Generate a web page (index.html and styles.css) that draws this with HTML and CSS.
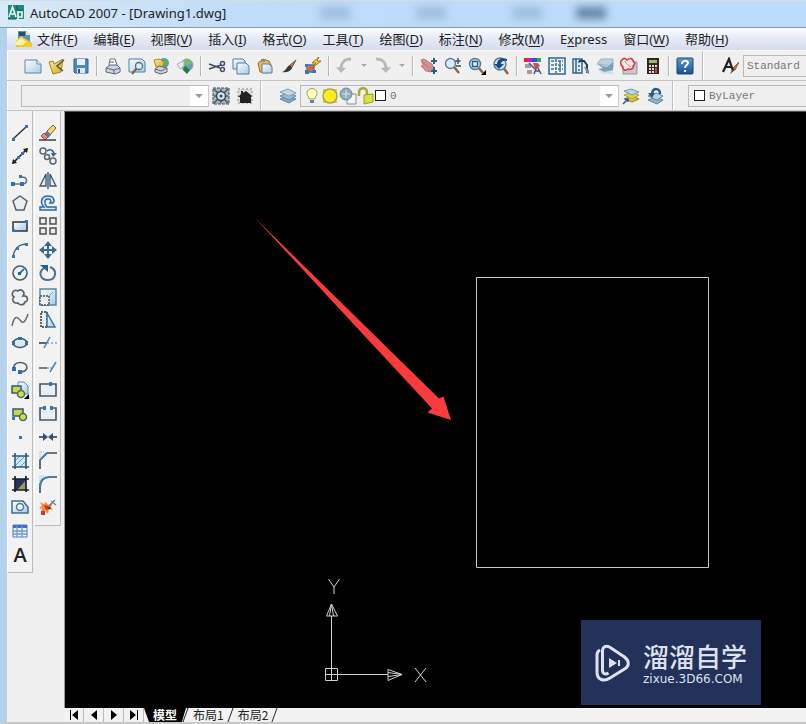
FILE: index.html
```html
<!DOCTYPE html>
<html lang="zh-CN">
<head>
<meta charset="utf-8">
<title>AutoCAD 2007 - [Drawing1.dwg]</title>
<link rel="stylesheet" href="styles.css">
</head>
<body>
<svg class="defs" aria-hidden="true">
  <defs>
    <linearGradient id="paper" x1="0" y1="0" x2="1" y2="1"><stop offset="0" stop-color="#fdfeff"/><stop offset="1" stop-color="#a9cbe6"/></linearGradient>
    <linearGradient id="gold" x1="0" y1="0" x2="1" y2="1"><stop offset="0" stop-color="#fff0a0"/><stop offset="1" stop-color="#d6a51c"/></linearGradient>
    <linearGradient id="blue" x1="0" y1="0" x2="0" y2="1"><stop offset="0" stop-color="#5b9bd8"/><stop offset="1" stop-color="#1b4f92"/></linearGradient>
  </defs>
</svg>

<header class="titlebar">
  <svg class="app-logo" viewBox="0 0 16 16"><rect width="16" height="14" fill="#23887a"/><path d="M1 12L4.500 2 8 12M3 9h4M10 6v9M10 7h4v5h-4" fill="none" stroke="#e9fff8" stroke-width="1.600"/><path d="M9 0v5h6M0 14h8" stroke="#0d5b50" fill="none"/></svg>
  <h1>AutoCAD 2007 - [Drawing1.dwg]</h1>
  <div class="reflections" aria-hidden="true"><i></i><i></i><i></i><i class="dark"></i></div>
</header>

<div class="frame">
  <nav class="menubar">
    <svg class="doc-logo" viewBox="0 0 18 18"><path d="M3 1h8l4 4v10H3z" fill="#5d91bc"/><path d="M4 2h6v4H4z" fill="#234f70"/><path d="M11 1v4h4" fill="#d9ebf6"/><path d="M1 11l5-5 11 7v4H1z" fill="#f5c822"/><path d="M1 12l5-4 6 4-4 3H1z" fill="#fff1a0"/></svg>
    <a href="#">文件(<u>F</u>)</a><a href="#">编辑(<u>E</u>)</a><a href="#">视图(<u>V</u>)</a><a href="#">插入(<u>I</u>)</a><a href="#">格式(<u>O</u>)</a><a href="#">工具(<u>T</u>)</a><a href="#">绘图(<u>D</u>)</a><a href="#">标注(<u>N</u>)</a><a href="#">修改(<u>M</u>)</a><a href="#">E<u>x</u>press</a><a href="#">窗口(<u>W</u>)</a><a href="#">帮助(<u>H</u>)</a>
  </nav>

  <div class="toolrow">
    <div class="bar bar-standard">
      <button aria-label="新建"><svg viewBox="0 0 18 18"><path d="M1 3h12l4 4v9H1z" fill="url(#paper)" stroke="#5b86a8"/><path d="M13 3v4h4" fill="#fff" stroke="#5b86a8"/></svg></button>
      <button aria-label="打开"><svg viewBox="0 0 18 18"><path d="M1 5l4-1 1 3 9-5-2 13-8 2z" fill="url(#gold)" stroke="#a68424"/><path d="M16 3l-7 6 6 5" fill="none" stroke="#4f5c50" stroke-width="1.500"/></svg></button>
      <button aria-label="保存"><svg viewBox="0 0 18 18"><path d="M2 2h14v14H3l-1-1z" fill="#5189bd" stroke="#35628f"/><path d="M5 2h8v6H5z" fill="#e6f1f9"/><path d="M5 11h8v5H5z" fill="#dbe8f2"/><path d="M6 12h2v4H6z" fill="#295988"/></svg></button>
      <span class="sep"></span>
      <button aria-label="打印"><svg viewBox="0 0 18 18"><path d="M5 8l1-6h5l2 6" fill="#fff" stroke="#65738b"/><path d="M2 11l4-3h7l3 3v4l-5 2-9-2z" fill="#cdd4e0" stroke="#59677f"/><path d="M2 11l8 2 6-2M10 13v4M5 5h5" fill="none" stroke="#59677f"/></svg></button>
      <button aria-label="打印预览"><svg viewBox="0 0 18 18"><path d="M1 2h13l3 3v10H1z" fill="url(#paper)" stroke="#4e7ea8"/><circle cx="11" cy="9" r="3.500" fill="#d6edfa" stroke="#4c7288" stroke-width="1.300"/><path d="M8.500 11.500L4 17" stroke="#8b5b3f" stroke-width="2"/></svg></button>
      <button aria-label="发布"><svg viewBox="0 0 18 18"><circle cx="12" cy="6" r="5" fill="#5d9ab5"/><path d="M11 2l5 2-1 5-4-2z" fill="#6aab55"/><path d="M2 3l6-1 4 4-2 5-6-1z" fill="url(#gold)" stroke="#b28a1d"/><path d="M3 12l4-3 8 2v4l-6 2-6-2z" fill="#cfd3d9" stroke="#5e6670"/><path d="M3 12l6 2 6-3" fill="none" stroke="#5e6670"/></svg></button>
      <button aria-label="三维 DWF"><svg viewBox="0 0 18 18"><circle cx="11" cy="8" r="6" fill="#5b9fb5" stroke="#8ba5b0"/><path d="M8 3l5-1 3 4-4 3-4-2z" fill="#80b86c"/><path d="M1 7l7-3v5l-4 3z" fill="#e5ebee" stroke="#aab3b8"/><path d="M9 9l5 4-3 4-4-4z" fill="#1f7b44"/></svg></button>
      <span class="sep"></span>
      <button aria-label="剪切"><svg viewBox="0 0 18 18"><path d="M1 7l11 4M1 12l12-4" stroke="#414f66" stroke-width="1.600"/><circle cx="14.500" cy="6.500" r="2" fill="none" stroke="#424e72" stroke-width="1.500"/><circle cx="14.500" cy="12.500" r="2" fill="none" stroke="#424e72" stroke-width="1.500"/></svg></button>
      <button aria-label="复制"><svg viewBox="0 0 18 18"><path d="M1 2h10l2 2v8H1z" fill="url(#paper)" stroke="#4e7ea8"/><path d="M5 6h9l3 3v8H5z" fill="url(#paper)" stroke="#4e7ea8"/></svg></button>
      <button aria-label="粘贴"><svg viewBox="0 0 18 18"><path d="M2 6l5-4 6 2 3 6-4 6-8-1z" fill="#e6b855" stroke="#9e7423"/><path d="M5 2h4v3H5z" fill="#8a8f92"/><path d="M6 7h7l3 3v6H6z" fill="url(#paper)" stroke="#56829f"/></svg></button>
      <button aria-label="特性匹配"><svg viewBox="0 0 18 18"><path d="M16 3L9 9l2 3z" fill="#b98454" stroke="#79512f"/><path d="M10 8l2 3c-2 4-6 5-10 4 4-1 4-5 8-7z" fill="#353a42"/></svg></button>
      <button aria-label="块编辑器"><svg viewBox="0 0 18 18"><path d="M3 8h7v7H3z" fill="#f09a60" stroke="#3769a8" stroke-width="1.300"/><path d="M1 13h4v4H1zM8 13h4v3H8zM1 7h3v3H1z" fill="#3478c4"/><circle cx="6.500" cy="11.500" r="2.500" fill="#ec5d24"/><path d="M15 0L8 6h4l-4 5 9-7h-4z" fill="#ffd21e" stroke="#8f7418"/></svg></button>
      <span class="sep"></span>
      <button aria-label="放弃"><svg viewBox="0 0 18 18"><path d="M15 2C8 2 5 5 5 13" fill="none" stroke="#b8b9bb" stroke-width="3"/><path d="M0 10l5 6 5-5z" fill="#b8b9bb"/></svg></button>
      <button class="drop" aria-label="放弃列表"><svg viewBox="0 0 8 8"><path d="M1 2h6L4 5z" fill="#aaa"/></svg></button>
      <button aria-label="重做"><svg viewBox="0 0 18 18"><path d="M2 2c7 0 10 3 10 11" fill="none" stroke="#b8b9bb" stroke-width="3"/><path d="M7 11l5 5 5-6z" fill="#b8b9bb"/></svg></button>
      <button class="drop" aria-label="重做列表"><svg viewBox="0 0 8 8"><path d="M1 2h6L4 5z" fill="#aaa"/></svg></button>
      <span class="sep"></span>
      <button aria-label="实时平移"><svg viewBox="0 0 18 18"><path d="M1 3l3-1 8 5 2 4-3 4-5-1-5-5 2-1z" fill="#d58f8b" stroke="#b9807c"/><path d="M2 5l6 5" stroke="#b9746f"/><path d="M14 1v6M11 4h6M14 10v7M11 14h6" stroke="#2b5d91" stroke-width="2"/></svg></button>
      <button aria-label="实时缩放"><svg viewBox="0 0 18 18"><path d="M10 10l5 6" stroke="#94643e" stroke-width="2.500"/><circle cx="6.500" cy="6.500" r="5" fill="#d7edf8" stroke="#647e8d" stroke-width="1.400"/><path d="M14 1v6M11.500 4h5M12 9h5" stroke="#334b69" stroke-width="1.400"/></svg></button>
      <button aria-label="窗口缩放"><svg viewBox="0 0 18 18"><path d="M10 10l5 6" stroke="#94643e" stroke-width="2.500"/><circle cx="7" cy="7" r="5.500" fill="#b9dbed" stroke="#5b788d" stroke-width="1.400"/><path d="M4.500 4.500h5v5h-5z" fill="#dceefa" stroke="#315d87" stroke-width="1.300"/><path d="M18 13v5h-5z" fill="#000"/></svg></button>
      <button aria-label="缩放上一个"><svg viewBox="0 0 18 18"><path d="M11 10l5 7" stroke="#94643e" stroke-width="2.500"/><circle cx="8" cy="7" r="6" fill="#c8e4f2" stroke="#5b788d" stroke-width="1.400"/><path d="M15 2C9 0 5 3 5 7H2l5 5 5-5H9c0-2 2-4 6-3z" fill="#174c83"/></svg></button>
      <span class="sep"></span>
      <button aria-label="特性"><svg viewBox="0 0 18 18"><path d="M0 1h4v4H0z" fill="#e22"/><path d="M4 1h4v4H4z" fill="#b624d0"/><path d="M8 1h5v4H8z" fill="#394ce2"/><path d="M13 1h4v4h-4z" fill="#22aa67"/><path d="M1 7h6v4H1zM3 13h5v4H3z" fill="#ae98a8"/><path d="M10 17l3-8 4 8M11 14h5M5 6l6 6" fill="none" stroke="#465771" stroke-width="1.500"/><path d="M9 6h5l2 3-5 3z" fill="#cd5155"/></svg></button>
      <button aria-label="设计中心"><svg viewBox="0 0 18 18"><path d="M1 1h16v16H1z" fill="#eaf4fb" stroke="#2f658e" stroke-width="1.500"/><path d="M3 4h5M3 8h5M3 12h5M10 4h5M10 8h5M10 12h5M8 2v14M12 4v11" stroke="#47718f" stroke-width="1.500" stroke-dasharray="3 1"/></svg></button>
      <button aria-label="工具选项板"><svg viewBox="0 0 18 18"><path d="M1 2h9v14H1z" fill="#e0eef8" stroke="#31658f" stroke-width="1.500"/><path d="M4 2v14M6 5h2M6 9h2M6 13h2" stroke="#31658f" stroke-width="1.500"/><path d="M7 4h5l3 4v8" fill="none" stroke="#213e58" stroke-width="2"/><path d="M12 9l5 4v4l-3-2z" fill="#718da0"/></svg></button>
      <button aria-label="图纸集"><svg viewBox="0 0 18 18"><path d="M5 2h12v9L9 8 1 7z" fill="#bcd3df" stroke="#98aeb9"/><path d="M1 7l10 3 6-5v11L8 15l-6-3 5-1z" fill="#79a1b8"/><path d="M1 13l7 2 9-2v4H7z" fill="#d4e2e8"/></svg></button>
      <button aria-label="标记集"><svg viewBox="0 0 18 18"><path d="M5 5h12v12H3v-4z" fill="#c7c9cc" stroke="#929598"/><path d="M2 3c2-3 4-1 5 0 3-3 6-1 6 1 3 2 1 5 0 5 1 3-3 4-5 3-2 2-6 1-5-2C0 8 0 4 2 3z" fill="#fbe8e8" stroke="#df3947" stroke-width="1.600"/><path d="M5 4c1 3 3 4 6 6" stroke="#e58088" fill="none"/></svg></button>
      <button aria-label="快速计算器"><svg viewBox="0 0 18 18"><path d="M3 1h12v16H3z" fill="#38261f"/><path d="M5 3h8v3H5z" fill="#95bb80"/><path d="M5 8h2v2H5zM8 8h2v2H8zM11 8h2v2h-2zM5 11h2v2H5zM8 11h2v2H8zM5 14h2v2H5zM8 14h2v2H8z" fill="#ddd"/><path d="M11 11h2v5h-2z" fill="#cb4942"/></svg></button>
      <span class="sep"></span>
      <button aria-label="帮助"><svg viewBox="0 0 18 18"><rect x="1" y="1" width="16" height="16" rx="1" fill="url(#blue)" stroke="#174678"/><path d="M6 7c0-4 6-4 6-1 0 2-3 2-3 5" fill="none" stroke="#fff" stroke-width="2"/><path d="M8 13h2v2H8z" fill="#fff"/></svg></button>
    </div>
    <div class="bar bar-style">
      <button aria-label="文字样式"><svg viewBox="0 0 18 18"><path d="M2 15L8 2l4 12M4 10h7" fill="none" stroke="#222" stroke-width="2.200"/><path d="M18 5l-6 6 2 2z" fill="#b97f4f" stroke="#8f5e39"/><path d="M12 11l2 2-5 4z" fill="#444"/></svg></button>
      <select class="box grow" aria-label="文字样式名"><option>Standard</option></select>
    </div>
  </div>

  <div class="toolrow">
    <div class="bar bar-workspace">
      <div class="combo box grow"><select aria-label="工作空间"><option></option></select><span class="arrow"><svg viewBox="0 0 8 8"><path d="M0 2h8L4 6z" fill="#999"/></svg></span></div>
      <button aria-label="工作空间设置"><svg viewBox="0 0 18 18"><path d="M1 1h16v16H1z" fill="#a9b7bf" stroke="#3b4c56" stroke-dasharray="3 1"/><path d="M2 2l14 14M16 2L2 16M9 2v14M2 9h14" stroke="#455b68" stroke-width="1.500"/><circle cx="9" cy="9" r="4.500" fill="#d7e0e5" stroke="#394c59" stroke-width="1.500"/><circle cx="9" cy="9" r="1.500" fill="#394c59"/></svg></button>
      <button aria-label="我的工作空间"><svg viewBox="0 0 18 18"><path d="M2 2h14v14H2z" fill="#ddd" stroke="#8b8b8b" stroke-dasharray="2 2"/><path d="M2 10l3-3V4h2v2l3-2 6 5-1 1v6H4v-6z" fill="#202224"/></svg></button>
    </div>
    <div class="bar bar-layers">
      <button aria-label="图层特性"><svg viewBox="0 0 18 18"><path d="M1 12l8-3 8 3-7 4z" fill="#8aa7bc" stroke="#6887a0"/><path d="M1 9l8-3 8 3-7 4z" fill="#9fbbd0" stroke="#6887a0"/><path d="M1 5l8-3 8 4-7 3z" fill="#c4d9e8" stroke="#809db4"/></svg></button>
      <div class="combo box grow">
        <span class="layer-state" aria-hidden="true">
          <svg viewBox="0 0 18 18"><path d="M6 12c0-3-2-3-2-6 0-6 10-6 10 0 0 3-2 3-2 6z" fill="#fffbbd" stroke="#aaa365"/><path d="M7 13h4v3H7z" fill="#748591"/></svg>
          <svg viewBox="0 0 18 18"><path d="M2 2h14v14H2z" fill="#c9cf79"/><circle cx="9" cy="9" r="7" fill="#ffee19" stroke="#aaa34b" stroke-width="1.500"/></svg>
          <svg viewBox="0 0 18 18"><path d="M8 7h9v10H8z" fill="#f5f5f5" stroke="#829099"/><circle cx="7" cy="7" r="6" fill="#8eabba" stroke="#6f8b9c"/><path d="M7 3v8M3 7h8" stroke="#c6d8e0" stroke-width="1.500"/></svg>
          <svg viewBox="0 0 18 18"><path d="M2 9V5c0-5 8-5 8 0v4" fill="none" stroke="#a8aa31" stroke-width="2.500"/><path d="M7 8l9-1v8l-9 2z" fill="#dce33f" stroke="#959d29"/></svg>
          <b></b>
        </span>
        <select aria-label="图层"><option>0</option></select><span class="arrow"><svg viewBox="0 0 8 8"><path d="M0 2h8L4 6z" fill="#999"/></svg></span>
      </div>
      <button aria-label="置为当前图层"><svg viewBox="0 0 18 18"><path d="M2 12l8-3 7 3-7 3z" fill="#d6c437" stroke="#94871e"/><path d="M2 8l8-3 7 3-7 4z" fill="#dfcf46" stroke="#b5a737"/><path d="M2 4l7-2 8 3-7 3z" fill="#bcd6e4" stroke="#7899ae"/><path d="M1 17l5-5M3 12h3v3" fill="none" stroke="#235ca5" stroke-width="1.500"/></svg></button>
      <button aria-label="上一个图层"><svg viewBox="0 0 18 18"><path d="M2 13l8-3 7 3-6 4z" fill="#91aec3" stroke="#6686a0"/><path d="M2 9l8-3 7 3-6 4z" fill="#bbd2e1" stroke="#6686a0"/><path d="M14 7c0-6-7-7-8 0" fill="none" stroke="#24588c" stroke-width="2.500"/><path d="M2 6h7l-3 5z" fill="#24588c"/></svg></button>
    </div>
    <div class="bar bar-color">
      <div class="combo box grow"><span class="swatch"></span><select aria-label="颜色"><option>ByLayer</option></select></div>
    </div>
  </div>

  <div class="work">
    <aside class="palettes">
      <div class="palette draw">
        <button aria-label="直线"><svg viewBox="0 0 18 18"><path d="M2 15L15 3" stroke="#333" stroke-width="1.500"/><path d="M1 14h3v3H1zM14 1h3v3h-3z" fill="#3373b2"/></svg></button>
        <button aria-label="构造线"><svg viewBox="0 0 18 18"><path d="M2 16L16 2" stroke="#222" stroke-width="1.700"/><path d="M17 1l-1 5-4-4zM1 17l1-5 4 4z" fill="#222"/><path d="M6 9h3v3H6zM10 5h3v3h-3z" fill="#3373b2"/></svg></button>
        <button aria-label="多段线"><svg viewBox="0 0 18 18"><path d="M2 13h9c6 0 6-7 0-7h-1" fill="none" stroke="#62788a" stroke-width="1.700"/><path d="M0 11h4v4H0zM9 11h4v4H9zM8 4h3v3H8z" fill="#2f72b5"/></svg></button>
        <button aria-label="正多边形"><svg viewBox="0 0 18 18"><path d="M9 2l7 5-3 9H5L2 7z" fill="#e8eef2" stroke="#53616c" stroke-width="1.500"/></svg></button>
        <button aria-label="矩形"><svg viewBox="0 0 18 18"><path d="M2 5h14v9H2z" fill="url(#paper)" stroke="#333" stroke-width="1.500"/><path d="M14 3h3v3h-3zM1 12h3v3H1z" fill="#3478b8"/></svg></button>
        <button aria-label="圆弧"><svg viewBox="0 0 18 18"><path d="M2 16C3 8 8 3 16 3" fill="none" stroke="#53616c" stroke-width="1.500"/><path d="M1 14h3v3H1zM5 6h3v3H5zM14 2h3v3h-3z" fill="#3478b8"/></svg></button>
        <button aria-label="圆"><svg viewBox="0 0 18 18"><circle cx="9" cy="9" r="7" fill="#e8f1f7" stroke="#4e5961" stroke-width="1.600"/><path d="M8 10l5-5" stroke="#3478b8" stroke-width="2"/><path d="M7 8h3v3H7z" fill="#225f9b"/></svg></button>
        <button aria-label="修订云线"><svg viewBox="0 0 18 18"><path d="M3 9C-1 6 3 0 7 3c3-3 8 1 5 5 5-1 6 5 2 6-1 4-6 3-7 1-4 1-7-3-4-6z" fill="#eef1f3" stroke="#58626a" stroke-width="1.600"/></svg></button>
        <button aria-label="样条曲线"><svg viewBox="0 0 18 18"><path d="M1 15C3 5 6 5 9 9s5 3 8-6" fill="none" stroke="#636d74" stroke-width="1.500"/></svg></button>
        <button aria-label="椭圆"><svg viewBox="0 0 18 18"><ellipse cx="9" cy="9" rx="7" ry="4.500" fill="#d8e9f4" stroke="#455967" stroke-width="1.600"/><path d="M1 7h3v4H1zM14 7h3v4h-3zM7 3h4v3H7z" fill="#2f6fac"/></svg></button>
        <button aria-label="椭圆弧"><svg viewBox="0 0 18 18"><path d="M3 11C1 2 17 3 16 10c-1 3-4 4-7 4" fill="none" stroke="#4e5f6c" stroke-width="1.600"/><path d="M1 9h4v4H1zM7 12h4v4H7z" fill="#2f6fac"/></svg></button>
        <button aria-label="插入块"><svg viewBox="0 0 18 18"><path d="M7 1h6l4 4v8H7z" fill="url(#paper)" stroke="#6389a8"/><path d="M1 5h9v7H1z" fill="#c2d94a" stroke="#305682" stroke-width="1.500"/><circle cx="10" cy="13" r="3.500" fill="#c9df56" stroke="#526a4c" stroke-width="1.500"/><path d="M18 13v5h-5z" fill="#000"/></svg></button>
        <button aria-label="创建块"><svg viewBox="0 0 18 18"><path d="M2 4h10v7H2z" fill="#c2d94a" stroke="#305682" stroke-width="1.500"/><circle cx="12" cy="12" r="3.500" fill="#c9df56" stroke="#526a4c" stroke-width="1.500"/><path d="M1 12h3v3H1z" fill="#3976ae"/></svg></button>
        <button aria-label="点"><svg viewBox="0 0 18 18"><path d="M8 8h3v3H8z" fill="#3478b8"/></svg></button>
        <button aria-label="图案填充"><svg viewBox="0 0 18 18"><path d="M4 4h11v11H4z" fill="#d0e8f8"/><path d="M4 9l5-5M4 14L14 4M9 15l6-6" stroke="#619ac4"/><path d="M4 1v16M15 1v16M1 4h17M1 15h17" stroke="#345879" stroke-width="1.600"/></svg></button>
        <button aria-label="渐变色"><svg viewBox="0 0 18 18"><path d="M4 4h11v11H4z" fill="#273257"/><path d="M15 5v10H6z" fill="#9a9d55"/><path d="M4 1v16M15 1v16M1 4h17M1 15h17" stroke="#18212b" stroke-width="1.700"/></svg></button>
        <button aria-label="面域"><svg viewBox="0 0 18 18"><path d="M1 3h11l5 6v6H1z" fill="url(#paper)" stroke="#396f9b" stroke-width="1.500"/><circle cx="9" cy="9" r="3.500" fill="#eff7fb" stroke="#4d7b9d" stroke-width="1.500"/></svg></button>
        <button aria-label="表格"><svg viewBox="0 0 18 18"><path d="M2 3h14v12H2z" fill="#e9f3fd" stroke="#4b7dc3"/><path d="M2 3h14v3H2z" fill="#3e70be"/><path d="M2 9h14M2 12h14M6 4v11M11 4v11" stroke="#6f9bd4" stroke-width="1.300"/></svg></button>
        <button class="mtext" aria-label="多行文字">A</button>
      </div>
      <div class="palette modify">
        <button aria-label="删除"><svg viewBox="0 0 18 18"><path d="M8 7l6-6 3 3-6 7z" fill="#f3d56e" stroke="#74632f"/><path d="M5 10l3-3 4 4-3 3z" fill="#547ab5"/><path d="M2 12l3-3 4 4-3 3z" fill="#e88780" stroke="#a94d49"/><path d="M0 16h17" stroke="#333" stroke-width="1.400"/></svg></button>
        <button aria-label="复制对象"><svg viewBox="0 0 18 18"><circle cx="4" cy="4" r="3" fill="none" stroke="#5a6670" stroke-width="1.500"/><circle cx="8" cy="10" r="2.500" fill="none" stroke="#5a6670" stroke-width="1.500"/><circle cx="14" cy="14" r="3" fill="none" stroke="#5a6670" stroke-width="1.500"/><path d="M8 4c4-3 7 0 7 4" fill="none" stroke="#326798" stroke-width="1.700"/><path d="M12 6h6l-4 4z" fill="#326798"/></svg></button>
        <button aria-label="镜像"><svg viewBox="0 0 18 18"><path d="M7 3v12H1zM11 3v12h6z" fill="#e8edf0" stroke="#4b5862" stroke-width="1.400"/><path d="M9 1v17" stroke="#3476b0" stroke-width="1.600"/></svg></button>
        <button aria-label="偏移"><svg viewBox="0 0 18 18"><path d="M1 16v-3h4C0 8 3 2 9 2s7 5 5 7h-3c2-3 0-4-2-4-4 0-4 5-1 8h9v3z" fill="#d6eafa" stroke="#316a9d" stroke-width="1.500"/></svg></button>
        <button aria-label="阵列"><svg viewBox="0 0 18 18"><path d="M1 1h6v6H1zM11 1h6v6h-6zM1 11h6v6H1zM11 11h6v6h-6z" fill="#eee" stroke="#4b5054" stroke-width="1.500"/></svg></button>
        <button aria-label="移动"><svg viewBox="0 0 18 18"><path d="M9 2v14M2 9h14" stroke="#3c6999" stroke-width="2"/><path d="M9 0l4 5H5zM9 18l4-5H5zM0 9l5-4v8zM18 9l-5-4v8z" fill="#3c6999"/></svg></button>
        <button aria-label="旋转"><svg viewBox="0 0 18 18"><path d="M11 3c8 3 6 13-2 13S-1 8 5 4" fill="none" stroke="#51708e" stroke-width="2"/><path d="M1 1h8v7z" fill="#285e94"/></svg></button>
        <button aria-label="缩放"><svg viewBox="0 0 18 18"><path d="M1 1h16v16H1z" fill="url(#paper)" stroke="#5583ac" stroke-width="1.400"/><path d="M1 8h9v9H1z" fill="#eef4f8" stroke="#374c60" stroke-width="1.400" stroke-dasharray="2 1"/><path d="M10 8l4-4" stroke="#7ba6ca"/></svg></button>
        <button aria-label="拉伸"><svg viewBox="0 0 18 18"><path d="M2 1h6v15H2z" fill="#eee" stroke="#333" stroke-width="1.500" stroke-dasharray="2 1"/><path d="M8 2l8 14H8z" fill="url(#paper)" stroke="#3b719f" stroke-width="1.500"/></svg></button>
        <button aria-label="修剪"><svg viewBox="0 0 18 18"><path d="M0 9h8" stroke="#333" stroke-width="1.500"/><path d="M8 9h10" stroke="#4a85b9" stroke-dasharray="2 2"/><path d="M5 14l6-11" stroke="#4a85b9" stroke-width="1.500"/></svg></button>
        <button aria-label="延伸"><svg viewBox="0 0 18 18"><path d="M0 10h8" stroke="#555" stroke-width="1.500"/><path d="M8 10h5" stroke="#4a85b9" stroke-dasharray="2 1"/><path d="M11 14l6-10" stroke="#4a85b9" stroke-width="1.500"/></svg></button>
        <button aria-label="打断于点"><svg viewBox="0 0 18 18"><path d="M1 3h16v12H1z" fill="#e6f0f6" stroke="#4a555d" stroke-width="1.600"/><path d="M10 1h3v4h-3z" fill="#3577ae"/></svg></button>
        <button aria-label="打断"><svg viewBox="0 0 18 18"><path d="M5 3H1v12h16V3h-4" fill="#e6f0f6" stroke="#4a555d" stroke-width="1.600"/><path d="M4 1h3v4H4zM11 1h3v4h-3z" fill="#3577ae"/></svg></button>
        <button aria-label="合并"><svg viewBox="0 0 18 18"><path d="M0 9h7M11 9h7" stroke="#333" stroke-width="1.600"/><path d="M4 5l5 4-5 4zM14 5L9 9l5 4z" fill="#26557f"/></svg></button>
        <button aria-label="倒角"><svg viewBox="0 0 18 18"><path d="M1 18V9l7-7h10" fill="none" stroke="#454b50" stroke-width="1.600"/><path d="M1 9l7-7" stroke="#3b83c0" stroke-width="2"/><path d="M1 6V1h5" fill="none" stroke="#aaa" stroke-dasharray="1 1"/></svg></button>
        <button aria-label="圆角"><svg viewBox="0 0 18 18"><path d="M1 18v-6C1 5 5 2 11 2h7" fill="none" stroke="#454b50" stroke-width="1.600"/><path d="M1 12C1 5 5 2 11 2" fill="none" stroke="#3b83c0" stroke-width="2.200"/><path d="M1 6V1h5" fill="none" stroke="#aaa" stroke-dasharray="1 1"/></svg></button>
        <button aria-label="分解"><svg viewBox="0 0 18 18"><path d="M1 4l4 2 2-2 2 3 5-3-2 5 2 3-4-1-1 5-3-3-4 3 1-5-3-1 3-2z" fill="#ef8e42"/><path d="M5 7l4 1 2 3-4 1zM2 13h4v4H2z" fill="#c83b29"/><path d="M10 8l6-6M12 3l5 4" stroke="#728894" stroke-width="1.500"/><path d="M10 8l2 3h-3z" fill="#473528"/></svg></button>
      </div>
    </aside>

    <main class="viewport">
      <section class="canvas">
        <svg class="drawing" aria-label="绘图区">
          <path d="M411.500 165.500h232v290h-232z" fill="none" stroke="#c8c8c8"/>
          <path d="M190 106L374 286.500 378.500 284.500 386 308 362.500 300.500 367 296.500z" fill="#f83c3c"/>
          <g fill="none" stroke="#d0d0d0">
            <path d="M260.500 556.500h12v12h-12zM266.500 568V504M260 562.500h63M266.500 492l-5 12h11zM266.500 492l-2 12M266.500 492l2 12M337 562.500l-14-5v11zM337 562.500l-14-2M337 562.500l-14 2"/>
            <path d="M263.500 467l5.500 8 5.500-8M269 475v7M350 556l11 14M361 556l-11 14"/>
          </g>
        </svg>
        <div class="watermark">
          <svg viewBox="0 0 36 38"><path d="M7.500 27V7c0-4 3-6 7-4l15 10c5 4 5 9 0 12L15 34c-6 4-13 2-13-6V11c0-3 1-4 3-5" fill="none" stroke="#dde2ee" stroke-width="3"/><path d="M7.500 26c0 4 3 5 6 3" fill="none" stroke="#dde2ee" stroke-width="3"/><path d="M14 14l8 5-8 5zM23 16h2v6h-2z" fill="#dde2ee"/></svg>
          <p><strong>溜溜自学</strong><span>zixue.3D66.COM</span></p>
        </div>
      </section>
      <footer class="tabs">
        <button class="step" aria-label="第一个"><svg viewBox="0 0 10 10"><path d="M1 0h1v10H1zM9 0v10L3 5z"/></svg></button>
        <button class="step" aria-label="前一个"><svg viewBox="0 0 10 10"><path d="M8 0v10L2 5z"/></svg></button>
        <button class="step" aria-label="后一个"><svg viewBox="0 0 10 10"><path d="M2 0v10l6-5z"/></svg></button>
        <button class="step" aria-label="最后一个"><svg viewBox="0 0 10 10"><path d="M1 0v10l6-5zM8 0h1v10H8z"/></svg></button>
        <button class="tab active">模型</button>
        <button class="tab">布局1</button>
        <button class="tab">布局2</button>
      </footer>
    </main>
  </div>
</div>
</body>
</html>
```
FILE: styles.css
```css
* { box-sizing: border-box; }

body {
  margin: 0;
  min-height: 100vh;
  display: flex;
  flex-direction: column;
  background: #efefef;
  color: #222;
  font: 13px/20px "Noto Sans", "Noto Sans CJK SC", sans-serif;
}

button, select { font: inherit; color: inherit; margin: 0; padding: 0; border: 0; background: none; }
svg { display: block; flex: none; }
.defs { position: absolute; width: 0; height: 0; }

.titlebar {
  display: flex;
  align-items: center;
  gap: 6px;
  height: 28px;
  padding: 0 8px 2px;
  background: linear-gradient(90deg, #d9e9f8, #bfdcf8 30%, #bbdcfc);
  border-top: 1px solid #d3dde6;
  border-bottom: 1px solid #8299b1;
}
.titlebar h1 { margin: 0; font-size: 13px; font-weight: 400; color: #222; white-space: nowrap; }
.app-logo { width: 16px; height: 16px; }
.reflections { display: flex; flex: 1; gap: 66px; padding-left: 88px; }
.reflections i { width: 30px; height: 12px; background: #9dbddb; filter: blur(4px); }
.reflections .dark { background: #6584a0; margin-left: -32px; }

.frame {
  flex: 1;
  display: flex;
  flex-direction: column;
  border-left: 7px solid #b5d2ec;
  border-bottom: 2px solid #c8c8c8;
}

.menubar {
  display: flex;
  align-items: center;
  gap: 16px;
  height: 23px;
  padding-left: 8px;
  background: linear-gradient(#fdfdff, #e8edf7 40%, #d5dcec);
  border-bottom: 1px solid #f7f7f7;
  white-space: nowrap;
}
.menubar a { color: #222; text-decoration: none; }
.menubar u { text-underline-offset: 2px; }
.doc-logo { width: 18px; height: 18px; margin-right: -12px; }

.toolrow { display: flex; height: 30px; border-bottom: 1px solid #c5c5c5; background: #f0f0f0; }
.bar { display: flex; align-items: center; border-right: 1px solid #bdbdbd; border-left: 1px solid #fff; }
.bar button { width: 24px; height: 24px; display: grid; place-items: center; flex: none; }
.bar button svg { width: 18px; height: 18px; }
.bar .drop { width: 14px; }
.bar .drop svg { width: 8px; height: 8px; }
.sep { flex: none; width: 2px; height: 20px; margin: 0 3px; background: #b4b4b4; border-right: 1px solid #fff; }
.bar-standard { padding: 0 5px 0 13px; }
.bar-style, .bar-color { flex: 1; border-right: 0; }
.bar-style { padding-left: 14px; }
.bar-style .box { margin-left: 1px; }
.bar-workspace { width: 254px; padding: 0 3px 0 13px; }
.bar-layers { width: 412px; padding: 0 5px 0 14px; }
.bar-color { padding-left: 14px; }

.grow { flex: 1; min-width: 0; }
.box { height: 22px; border: 1px solid #b9b9b9; border-right-color: #ccc; background: #efefef; }
select {
  appearance: none;
  min-width: 0;
  color: #777;
  font: 11px/20px "Liberation Mono", monospace;
}
select.box { padding-left: 3px; border-right: 0; }
.combo { display: flex; align-items: center; }
.combo select { flex: 1; height: 20px; }
.arrow { display: grid; place-items: center; width: 18px; height: 20px; background: #fff; }
.arrow svg { width: 8px; height: 8px; }
.layer-state { display: flex; align-items: center; padding: 0 4px 0 2px; }
.layer-state svg { width: 18px; height: 18px; }
.layer-state b, .swatch { width: 11px; height: 11px; border: 1px solid #222; background: #fff; }
.swatch { margin: 0 4px 0 5px; }
.bar-color .combo { border-right: 0; }

.work { flex: 1; display: flex; }
.palettes { display: flex; align-items: flex-start; gap: 1px; width: 57px; background: #efefef; }
.palette {
  display: grid;
  grid-auto-rows: 1fr;
  padding: 10px 0 6px;
  border: 1px solid #bcbcbc;
  border-top: 0;
  border-left-color: #fff;
  background: #f2f2f2;
}
.draw { width: 26px; height: 462px; }
.modify { width: 27px; height: 415px; }
.palette button { display: grid; place-items: center; min-height: 0; }
.palette svg { width: 18px; height: 18px; }
.palette .mtext { font: 600 20px/23px "Open Sans", sans-serif; color: #222; }

.viewport { flex: 1; display: flex; flex-direction: column; min-width: 0; }
.canvas { position: relative; flex: 1; background: #000; border-top: 1px solid #555; border-left: 1px solid #999; }
.drawing { position: absolute; inset: 0; width: 100%; height: 100%; }

.watermark {
  position: absolute;
  right: 45px;
  bottom: 3px;
  display: flex;
  align-items: center;
  gap: 12px;
  width: 180px;
  height: 85px;
  padding-left: 14px;
  background: #22305a;
  color: #dde2ee;
}
.watermark svg { width: 36px; height: 38px; }
.watermark p { margin: 0; display: flex; flex-direction: column; }
.watermark strong { font: 500 26px/32px "Noto Sans CJK SC", sans-serif; }
.watermark span { font: 12px/14px "DejaVu Sans", sans-serif; }

.tabs { display: flex; height: 14px; background: #f2f2f2; }
.tabs .step { display: grid; place-items: center; width: 20px; border-right: 1px solid #bbb; }
.step svg { width: 10px; height: 10px; }
.tab { position: relative; z-index: 0; height: 14px; padding: 0 7px; font: 12px/14px "Noto Sans CJK SC", sans-serif; }
.tab::after { content: ""; position: absolute; right: 0; top: 0; width: 1px; height: 14px; background: #222; transform: skewX(-20deg); }
.tab.active { padding: 0 9px; color: #fff; font-weight: 700; }
.tab.active::before {
  content: "";
  position: absolute;
  z-index: -1;
  inset: 0;
  background: #000;
  clip-path: polygon(0 0, 100% 0, 90% 100%, 12% 100%);
}
```
